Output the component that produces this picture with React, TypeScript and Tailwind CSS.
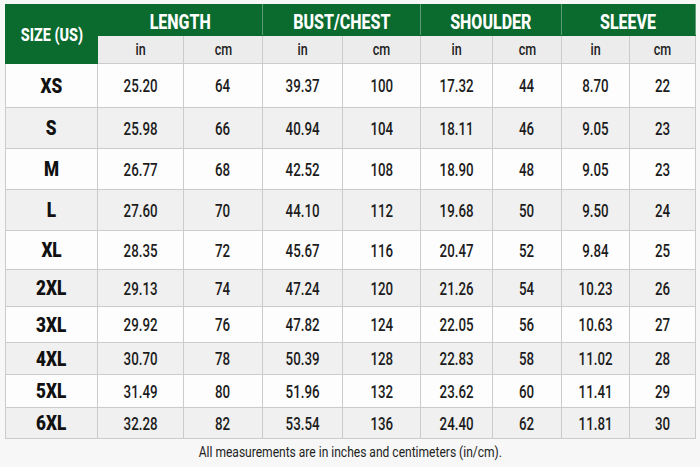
import React from "react";

const rows: [string, string, string, string, string, string, string, string, string, number][] = [
  ["XS", "25.20", "64", "39.37", "100", "17.32", "44", "8.70", "22", 44],
  ["S", "25.98", "66", "40.94", "104", "18.11", "46", "9.05", "23", 41],
  ["M", "26.77", "68", "42.52", "108", "18.90", "48", "9.05", "23", 41],
  ["L", "27.60", "70", "44.10", "112", "19.68", "50", "9.50", "24", 41],
  ["XL", "28.35", "72", "45.67", "116", "20.47", "52", "9.84", "25", 39],
  ["2XL", "29.13", "74", "47.24", "120", "21.26", "54", "10.23", "26", 37],
  ["3XL", "29.92", "76", "47.82", "124", "22.05", "56", "10.63", "27", 36],
  ["4XL", "30.70", "78", "50.39", "128", "22.83", "58", "11.02", "28", 32],
  ["5XL", "31.49", "80", "51.96", "132", "23.62", "60", "11.41", "29", 33],
  ["6XL", "32.28", "82", "53.54", "136", "24.40", "62", "11.81", "30", 31],
];

const widths = [92, 86, 79, 80, 78, 72, 69, 68, 66];

export default function App() {
  return (
    <div
      className="w-[700px] h-[467px] bg-[#f7f7f7] pt-[4px] pl-[5px] text-[#1a1a1a]"
      style={{ fontFamily: "Roboto, 'DejaVu Sans', sans-serif" }}
    >
      <table className="border-collapse table-fixed w-[690px]">
        <colgroup>
          {widths.map((w, i) => (
            <col key={i} style={{ width: w }} />
          ))}
        </colgroup>
        <thead>
          <tr className="h-[31px]">
            <th
              rowSpan={2}
              className="bg-[#0b6b2f] text-white text-[18px] leading-none font-extrabold border border-[#0b6b2f] whitespace-nowrap"
            >
              <span className="inline-block scale-x-[0.8] pt-[2px]">SIZE (US)</span>
            </th>
            {["LENGTH", "BUST/CHEST", "SHOULDER", "SLEEVE"].map((h) => (
              <th
                key={h}
                colSpan={2}
                className="bg-[#0b6b2f] text-white text-[20px] leading-none font-extrabold border-x border-x-[#5e9a72] border-y border-y-[#0b6b2f] whitespace-nowrap"
              >
                <span className="inline-block scale-x-[0.8] pt-[3px]">{h}</span>
              </th>
            ))}
          </tr>
          <tr className="h-[28px]">
            {Array.from({ length: 8 }).map((_, i) => (
              <th
                key={i}
                className="bg-[#ececec] font-medium text-[16.5px] leading-none text-[#222] border border-[#cbcbcb]"
              >
                <span className="inline-block scale-x-[0.76] pt-[1px]">{i % 2 === 0 ? "in" : "cm"}</span>
              </th>
            ))}
          </tr>
        </thead>
        <tbody>
          {rows.map((r, ri) => (
            <tr
              key={r[0]}
              className={ri % 2 === 0 ? "bg-[#fdfdfd]" : "bg-[#f0f0f0]"}
              style={{ height: r[9] }}
            >
              <td className="text-center font-black text-[19.5px] leading-none text-[#111] border border-[#cbcbcb] whitespace-nowrap">
                <span className="inline-block scale-x-[0.88] pt-[2px]">{r[0]}</span>
              </td>
              {r.slice(1, 9).map((v, i) => (
                <td
                  key={i}
                  className="text-center font-medium text-[18.5px] leading-none text-[#1c1c1c] border border-[#cbcbcb] whitespace-nowrap"
                >
                  <span className="inline-block scale-x-[0.72] pt-[2px]">{v}</span>
                </td>
              ))}
            </tr>
          ))}
        </tbody>
      </table>
      <div className="w-[690px] text-center text-[14px] text-[#222] mt-[3px] whitespace-nowrap">
        <span className="inline-block scale-x-[0.86]">All measurements are in inches and centimeters (in/cm).</span>
      </div>
    </div>
  );
}
